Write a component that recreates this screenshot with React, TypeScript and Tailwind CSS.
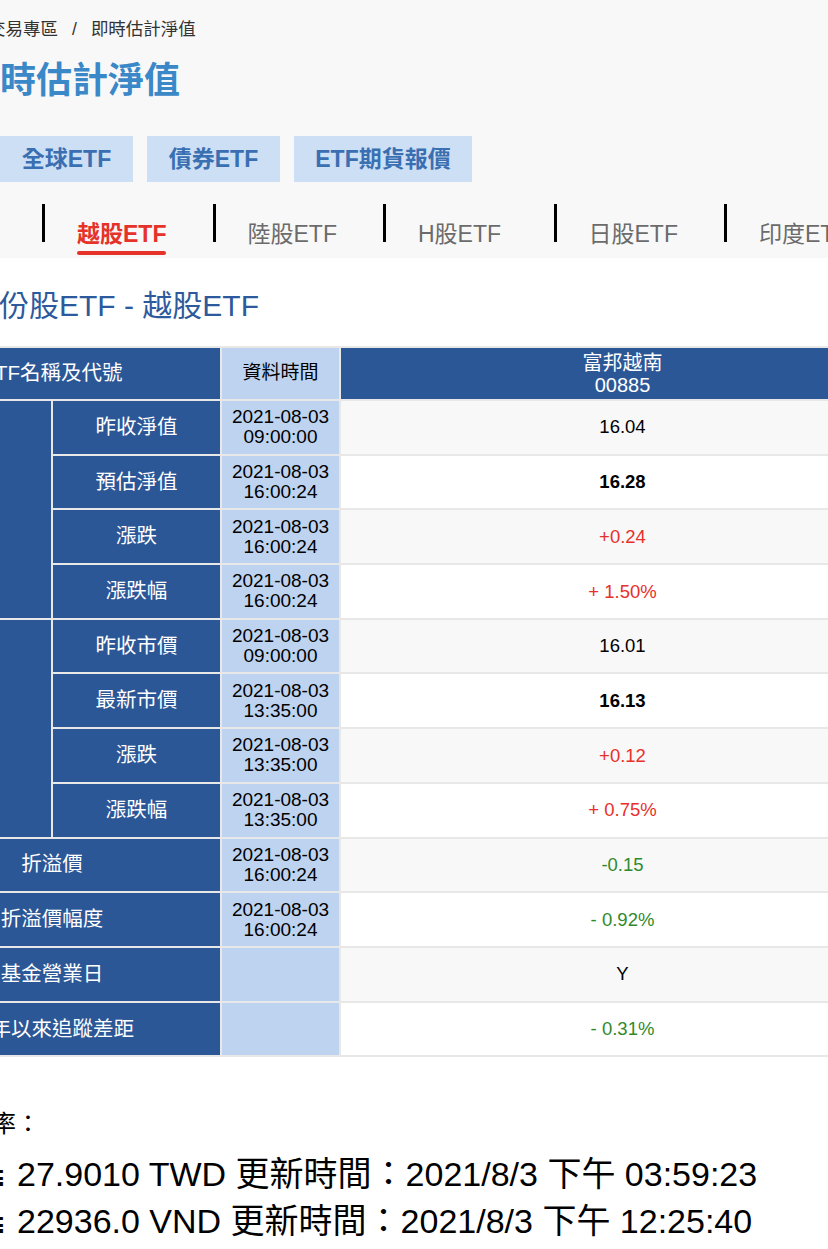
import React from 'react';

type Tone = 'plain' | 'bold' | 'up' | 'down';

type Row = {
  label: string;
  date?: string;
  time?: string;
  value: string;
  tone: Tone;
};

const navRows: Row[] = [
  { label: '昨收淨值', date: '2021-08-03', time: '09:00:00', value: '16.04', tone: 'plain' },
  { label: '預估淨值', date: '2021-08-03', time: '16:00:24', value: '16.28', tone: 'bold' },
  { label: '漲跌', date: '2021-08-03', time: '16:00:24', value: '+0.24', tone: 'up' },
  { label: '漲跌幅', date: '2021-08-03', time: '16:00:24', value: '+ 1.50%', tone: 'up' },
];

const priceRows: Row[] = [
  { label: '昨收市價', date: '2021-08-03', time: '09:00:00', value: '16.01', tone: 'plain' },
  { label: '最新市價', date: '2021-08-03', time: '13:35:00', value: '16.13', tone: 'bold' },
  { label: '漲跌', date: '2021-08-03', time: '13:35:00', value: '+0.12', tone: 'up' },
  { label: '漲跌幅', date: '2021-08-03', time: '13:35:00', value: '+ 0.75%', tone: 'up' },
];

const otherRows: Row[] = [
  { label: '折溢價', date: '2021-08-03', time: '16:00:24', value: '-0.15', tone: 'down' },
  { label: '折溢價幅度', date: '2021-08-03', time: '16:00:24', value: '- 0.92%', tone: 'down' },
  { label: '基金營業日', value: 'Y', tone: 'plain' },
  { label: '今年以來追蹤差距', value: '- 0.31%', tone: 'down' },
];

const toneClass: Record<Tone, string> = {
  plain: 'text-black',
  bold: 'font-bold text-black',
  up: 'text-[#e8302a]',
  down: 'text-[#2f8a2c]',
};

const tabs = ['越股ETF', '陸股ETF', 'H股ETF', '日股ETF', '印度ETF'];

const rates = [
  { value: '27.9010 TWD', time: '03:59:23' },
  { value: '22936.0 VND', time: '12:25:40' },
];

const cell = 'border-2 border-[#e8e8e8] p-0 text-center align-middle';

function TimeCell({ row }: { row: Row }) {
  return (
    <td className={`${cell} bg-[#bdd3ef] text-[19px] leading-[20px] text-black`}>
      {row.date && (
        <>
          {row.date}
          <br />
          {row.time}
        </>
      )}
    </td>
  );
}

function ValueCell({ row, index }: { row: Row; index: number }) {
  return (
    <td
      className={`${cell} text-[18.5px] ${toneClass[row.tone]} ${
        index % 2 === 0 ? 'bg-[#f8f8f8]' : 'bg-white'
      }`}
    >
      {row.value}
    </td>
  );
}

export default function App() {
  let idx = 0;

  return (
    <div className="w-[828px] min-h-[1249px] overflow-hidden bg-white font-['Liberation_Sans','Noto_Sans_CJK_TC',sans-serif]">
      {/* header area */}
      <div className="h-[258px] bg-[#f8f8f8]">
        <div className="ml-[-12px] pt-[17px] text-[17.5px] leading-[24px] whitespace-nowrap text-[#333]">
          交易專區<span className="mx-[14px]">/</span>即時估計淨值
        </div>
        <h1 className="ml-[-36px] mt-[16px] text-[36px] font-bold leading-[48px] whitespace-nowrap text-[#3a88c8]">
          即時估計淨值
        </h1>
        <div className="mt-[31px] flex gap-[14px]">
          {[
            ['全球ETF', 'w-[133px]'],
            ['債券ETF', 'w-[133px]'],
            ['ETF期貨報價', 'w-[178px]'],
          ].map(([label, w]) => (
            <div
              key={label}
              className={`${w} flex h-[46px] items-center justify-center bg-[#cddff4] text-[23px] font-bold text-[#3a6fb2]`}
            >
              {label}
            </div>
          ))}
        </div>
        <div className="ml-[42px] mt-[22px] flex whitespace-nowrap">
          {tabs.map((tab, i) => (
            <div key={tab} className="flex w-[170.5px] shrink-0 items-start">
              <div className="h-[38px] w-[3px] bg-black" />
              <div className="ml-[32px] mt-[15px] flex flex-col items-start">
                <span
                  className={`text-[23px] leading-[30px] ${
                    i === 0 ? 'font-bold text-[#e5332a]' : 'text-[#6b6b6b]'
                  }`}
                >
                  {tab}
                </span>
                {i === 0 && <div className="mt-[2px] h-[4px] w-full rounded-full bg-[#e5332a]" />}
              </div>
            </div>
          ))}
        </div>
      </div>

      {/* section title */}
      <h2 className="ml-[-31px] mt-[29px] text-[30px] leading-[38px] whitespace-nowrap text-[#2d5a9c]">
        成份股ETF - 越股ETF
      </h2>

      {/* table */}
      <table className="ml-[-118px] mt-[21px] w-[1022px] table-fixed border-collapse">
        <colgroup>
          <col className="w-[169px]" />
          <col className="w-[169px]" />
          <col className="w-[119px]" />
          <col className="w-[565px]" />
        </colgroup>
        <tbody>
          <tr className="h-[53px]">
            <td colSpan={2} className={`${cell} bg-[#2c5797] text-[20.5px] text-white`}>
              ETF名稱及代號
            </td>
            <td className={`${cell} bg-[#bdd3ef] text-[19px] text-black`}>資料時間</td>
            <td className={`${cell} bg-[#2c5797] text-[20px] leading-[22px] text-white`}>
              富邦越南
              <br />
              00885
            </td>
          </tr>
          {[
            { group: '淨值', rows: navRows },
            { group: '市價', rows: priceRows },
          ].map(({ group, rows }) =>
            rows.map((row, i) => {
              const n = idx++;
              return (
                <tr key={group + row.label} className="h-[54.7px]">
                  {i === 0 && (
                    <td rowSpan={rows.length} className={`${cell} bg-[#2c5797] text-[20.5px] text-white`}>
                      {group}
                    </td>
                  )}
                  <td className={`${cell} bg-[#2c5797] text-[20.5px] text-white`}>{row.label}</td>
                  <TimeCell row={row} />
                  <ValueCell row={row} index={n} />
                </tr>
              );
            }),
          )}
          {otherRows.map((row) => {
            const n = idx++;
            return (
              <tr key={row.label} className="h-[54.7px]">
                <td colSpan={2} className={`${cell} bg-[#2c5797] text-[20.5px] text-white whitespace-nowrap`}>
                  {row.label}
                </td>
                <TimeCell row={row} />
                <ValueCell row={row} index={n} />
              </tr>
            );
          })}
        </tbody>
      </table>

      {/* exchange rates */}
      <div className="mt-[50px] whitespace-nowrap text-black">
        <div className="ml-[-32px] text-[24px] leading-[34px]">匯率：</div>
        <div className="mt-[10px] flex flex-col">
          {rates.map((r) => (
            <div key={r.value} className="ml-[-133px] text-[34px] leading-[47px]">
              <span className="inline-block w-[150px] pr-[10px] text-right">1 USD ≒</span>
              {r.value} 更新時間：2021/8/3 下午 {r.time}
            </div>
          ))}
        </div>
      </div>
    </div>
  );
}
